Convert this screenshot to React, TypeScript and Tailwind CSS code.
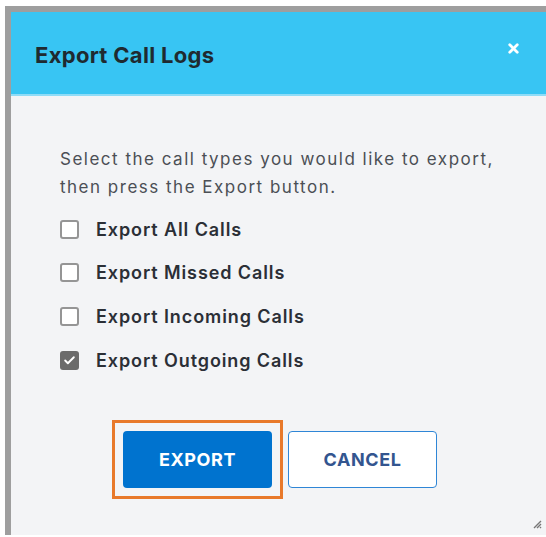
import { Check, X } from "lucide-react"

const callTypes = [
  { label: "Export All Calls", checked: false },
  { label: "Export Missed Calls", checked: false },
  { label: "Export Incoming Calls", checked: false },
  { label: "Export Outgoing Calls", checked: true },
]

function Checkbox({ checked }: { checked: boolean }) {
  return checked ? (
    <span className="flex h-[19px] w-[19px] shrink-0 items-center justify-center rounded-[3px] bg-[#6b6b6b]">
      <Check className="h-[13px] w-[13px] text-white" strokeWidth={3.5} />
    </span>
  ) : (
    <span className="h-[19px] w-[19px] shrink-0 rounded-[3px] border-2 border-[#959595] bg-white" />
  )
}

export default function App() {
  return (
    <div className="h-[537px] w-[546px] overflow-hidden bg-white pl-[5px] pt-[6px] font-['Inter',sans-serif]">
      <div className="flex h-[529px] flex-col border-l-[6px] border-t-[6px] border-[#9e9e9e] bg-[#f3f4f6]">
        {/* header */}
        <div className="flex h-[84px] items-center justify-between border-b-2 border-[#8fdcf7] bg-[#38c5f3] pl-[24px] pr-[25px]">
          <h1 className="mt-[4px] text-[22px] font-bold tracking-[0.3px] text-[#1f2a30]">Export Call Logs</h1>
          <X className="mb-[10px] h-[15px] w-[15px] text-white" strokeWidth={4.5} />
        </div>

        {/* body */}
        <div className="relative flex-1 pl-[49px] pt-[49px]">
          <p className="whitespace-nowrap text-[17px] leading-[28px] tracking-[1.5px] text-[#4b4f55]">
            Select the call types you would like to export,
            <br />
            then press the Export button.
          </p>

          <div className="mt-[18px] flex flex-col gap-[23.7px]">
            {callTypes.map((item) => (
              <label key={item.label} className="flex h-[20px] items-center gap-[17px]">
                <Checkbox checked={item.checked} />
                <span className="text-[18px] font-semibold tracking-[0.9px] text-[#2b2f36]">{item.label}</span>
              </label>
            ))}
          </div>

          <div className="mt-[50px] flex items-center gap-[5px] pl-[52px]">
            <div className="border-[3px] border-[#e8792b] p-[8px]">
              <button className="h-[57px] w-[149px] rounded-[4px] bg-[#0073cf] text-[18px] font-bold tracking-[0.6px] text-white">
                EXPORT
              </button>
            </div>
            <button className="h-[57px] w-[149px] rounded-[4px] border-[1.5px] border-[#2f86d6] bg-white text-[18px] font-bold tracking-[0.6px] text-[#33558f]">
              CANCEL
            </button>
          </div>

          {/* resize grip */}
          <svg className="absolute bottom-[6px] right-[4px]" width="10" height="10" viewBox="0 0 10 10">
            <path d="M9 2 L2 9 M9 5 L5 9 M9 8 L8 9" stroke="#777" strokeWidth="1.4" />
          </svg>
        </div>
      </div>
    </div>
  )
}
